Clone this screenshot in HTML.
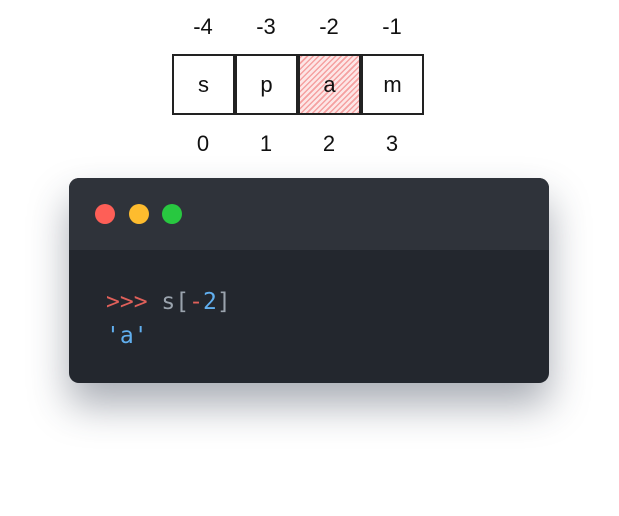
<!DOCTYPE html>
<html><head><style>
body{margin:0;width:619px;height:516px;background:#fff;position:relative;overflow:hidden;font-family:"Liberation Sans",sans-serif}
.lbl{position:absolute;width:62px;text-align:center;font-size:22px;color:#111}
.box{position:absolute;top:54px;width:59px;height:57px;border:2px solid #222;text-align:center;line-height:57px;font-size:22px;color:#111}
.win{position:absolute;left:69px;top:178px;width:480px;height:205px;border-radius:10px;background:#23272e;overflow:hidden;box-shadow:0 22px 40px rgba(40,50,70,.4)}
.bar{height:72px;background:#2f333a}
.dot{position:absolute;top:26px;width:20px;height:20px;border-radius:50%}
.code{position:absolute;left:37px;top:107px;font-family:"DejaVu Sans Mono",monospace;font-size:23px;line-height:34px;color:#9aa3ad}
</style></head><body>
<div class="lbl" style="left:172px;top:14px">-4</div>
<div class="lbl" style="left:235px;top:14px">-3</div>
<div class="lbl" style="left:298px;top:14px">-2</div>
<div class="lbl" style="left:361px;top:14px">-1</div>
<div class="box" style="left:172px">s</div>
<div class="box" style="left:235px">p</div>
<div class="box" style="left:298px;background:repeating-linear-gradient(-45deg,#f5a0a0 0 1.5px,#fde6e6 1.5px 4px)">a</div>
<div class="box" style="left:361px">m</div>
<div class="lbl" style="left:172px;top:131px">0</div>
<div class="lbl" style="left:235px;top:131px">1</div>
<div class="lbl" style="left:298px;top:131px">2</div>
<div class="lbl" style="left:361px;top:131px">3</div>
<div class="win"><div class="bar"></div>
<div class="dot" style="left:26px;background:#fe5f57"></div>
<div class="dot" style="left:60px;background:#febc2e"></div>
<div class="dot" style="left:93px;background:#28c840"></div>
<div class="code"><span style="color:#e0605a">&gt;&gt;&gt;</span> s[<span style="color:#e0605a">-</span><span style="color:#61afef">2</span>]<br><span style="color:#61afef">'a'</span></div>
</div>
</body></html>
